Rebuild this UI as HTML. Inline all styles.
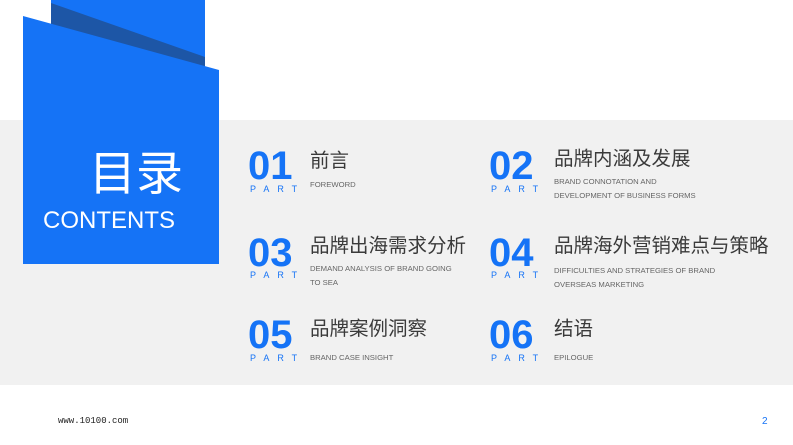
<!DOCTYPE html><html><head><style>
body{margin:0;width:793px;height:445px;background:#fff;position:relative;overflow:hidden;font-family:"Liberation Sans","Noto Sans CJK SC",sans-serif}
.band{position:absolute;left:0;top:120px;width:793px;height:265px;background:#f1f1f1}
.n{position:absolute;font-size:40px;font-weight:bold;color:#1573f6;line-height:1;letter-spacing:0px}
.p{position:absolute;font-size:9px;color:#1573f6;letter-spacing:8px}
.t{position:absolute;font-size:19.5px;color:#3a3a3a;line-height:1}
.s{position:absolute;font-size:7.7px;color:#666;line-height:14px}
</style></head><body>
<div class="band"></div>
<svg style="position:absolute;left:0;top:0" width="793" height="300">
<rect x="51" y="0" width="154" height="70" fill="#1573f6"/>
<polygon points="51,3 205,57 205,70 51,30" fill="#1d56a6"/>
<polygon points="23,16 219,70 219,264 23,264" fill="#1573f6"/>
</svg>
<div style="position:absolute;left:89px;top:150px;font-size:47px;color:#fff;line-height:1">目录</div>
<div style="position:absolute;left:43px;top:209px;font-size:24px;color:#fff;line-height:1">CONTENTS</div>

<div class="n" style="left:248px;top:146px">01</div><div class="p" style="left:250px;top:184px">PART</div>
<div class="t" style="left:310px;top:152px">前言</div><div class="s" style="left:310px;top:178px">FOREWORD</div>

<div class="n" style="left:489px;top:146px">02</div><div class="p" style="left:491px;top:184px">PART</div>
<div class="t" style="left:554px;top:150px">品牌内涵及发展</div><div class="s" style="left:554px;top:175px">BRAND CONNOTATION AND<br>DEVELOPMENT OF BUSINESS FORMS</div>

<div class="n" style="left:248px;top:233px">03</div><div class="p" style="left:250px;top:270px">PART</div>
<div class="t" style="left:310px;top:237px">品牌出海需求分析</div><div class="s" style="left:310px;top:262px">DEMAND ANALYSIS OF BRAND GOING<br>TO SEA</div>

<div class="n" style="left:489px;top:233px">04</div><div class="p" style="left:491px;top:270px">PART</div>
<div class="t" style="left:554px;top:237px">品牌海外营销难点与策略</div><div class="s" style="left:554px;top:264px">DIFFICULTIES AND STRATEGIES OF BRAND<br>OVERSEAS MARKETING</div>

<div class="n" style="left:248px;top:315px">05</div><div class="p" style="left:250px;top:353px">PART</div>
<div class="t" style="left:310px;top:320px">品牌案例洞察</div><div class="s" style="left:310px;top:351px">BRAND CASE INSIGHT</div>

<div class="n" style="left:489px;top:315px">06</div><div class="p" style="left:491px;top:353px">PART</div>
<div class="t" style="left:554px;top:320px">结语</div><div class="s" style="left:554px;top:351px">EPILOGUE</div>

<div style="position:absolute;left:58px;top:416px;font-size:9px;font-family:'Liberation Mono',monospace;color:#222">www.10100.com</div>
<div style="position:absolute;left:762px;top:416px;font-size:10px;color:#1573f6">2</div>
</body></html>
